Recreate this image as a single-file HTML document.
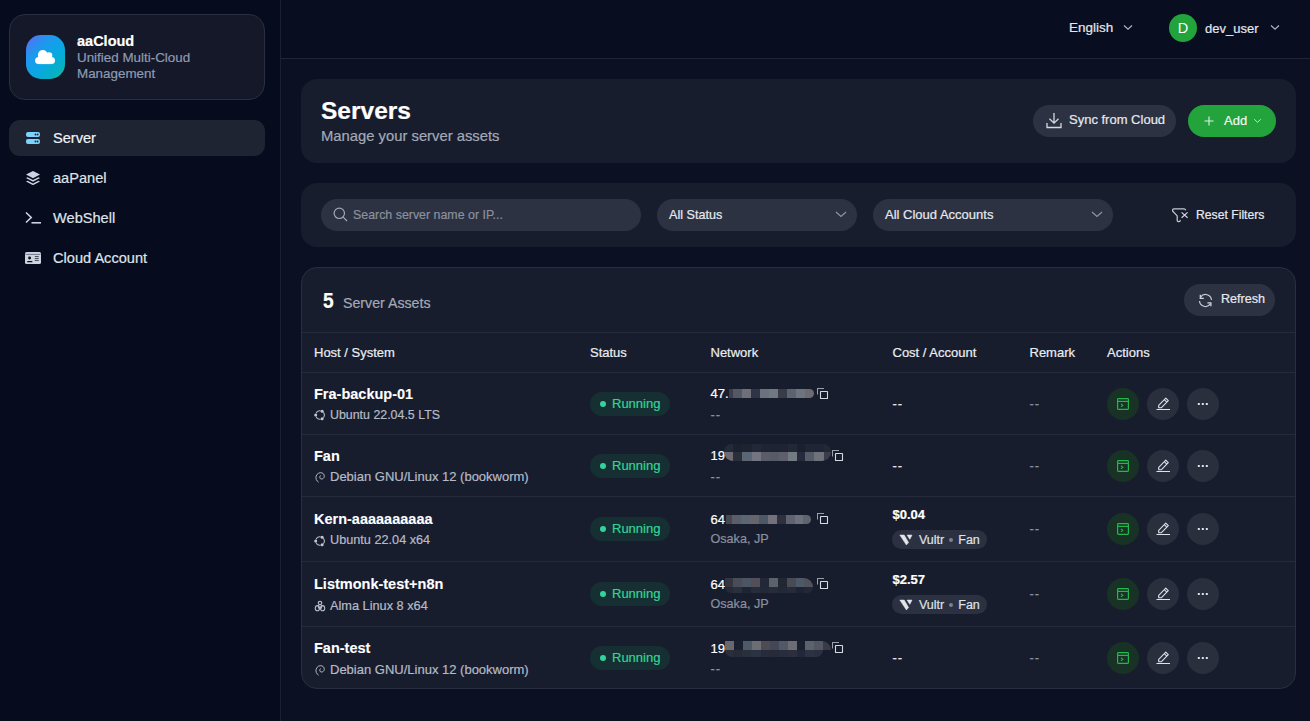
<!DOCTYPE html>
<html><head><meta charset="utf-8"><title>aaCloud - Servers</title>
<style>
*{box-sizing:border-box;margin:0;padding:0}
html,body{width:1310px;height:721px;overflow:hidden;background:#0b1023;font-family:"Liberation Sans",sans-serif;color:#e5e7eb}
.abs{position:absolute}
.nw{white-space:nowrap}
#sidebar{left:0;top:0;width:281px;height:721px;background:#060b1d;border-right:1px solid #1b2030}
#brand{left:9px;top:14px;width:256px;height:86px;background:#151829;border:1px solid #2a2e3d;border-radius:16px}
#logo{left:26px;top:35px;width:39px;height:44px;border-radius:15px;background:linear-gradient(135deg,#6268f2 0%,#2196ee 30%,#0aa6e6 55%,#06b0c8 78%,#12b797 100%)}
.brand-t{left:77px;top:33px;font-size:14.5px;font-weight:700;color:#fff;white-space:nowrap}
.brand-s{left:77px;top:50px;font-size:13.4px;line-height:16px;color:#8d9bb2;width:170px}
.nav{left:9px;width:256px;height:36px;border-radius:11px}
.nav.active{background:#1f2433}
.nav .ic{position:absolute;left:17px;top:11px;width:14px;height:14px}
.nav .lb{position:absolute;left:44px;top:10px;font-size:14.6px;color:#dfe3ea;white-space:nowrap}
#header{left:281px;top:0;width:1029px;height:59px;background:#080d1f;border-bottom:1px solid #1f2436}
.card{background:#181d2e;border-radius:16px}
.pill{border-radius:999px}
.btn-gray{background:#2d3243}
.th{font-size:13px;color:#eceef2;white-space:nowrap;top:345px}
.hline{position:absolute;left:302px;width:993px;height:1px;background:#262b3b}
.name{font-size:14.5px;font-weight:700;color:#fff;white-space:nowrap}
.os{font-size:12.6px;color:#b5bbc6;white-space:nowrap}
.stat{position:absolute;left:590px;width:80px;height:24px;border-radius:12px;background:#152f32}
.stat i{position:absolute;left:10px;top:9px;width:6px;height:6px;border-radius:50%;background:#34d399}
.stat span{position:absolute;left:22px;top:4px;font-size:13px;color:#34d399;white-space:nowrap}
.ip{font-size:13px;color:#fff;white-space:nowrap}
.dash{font-size:13px;color:#8a909d;white-space:nowrap;letter-spacing:1px}
.abtn{position:absolute;width:32px;height:32px;border-radius:50%;background:#2a2f3e}
.abtn.g{background:#183326}
.mz{position:absolute;height:9px}
body div{-webkit-text-stroke:0.2px currentColor}
.name,.bold{-webkit-text-stroke:0.1px currentColor}
</style></head>
<body>

<div id="sidebar" class="abs"></div>
<div id="brand" class="abs"></div>
<div id="logo" class="abs">
  <svg width="21" height="15" viewBox="0 0 21 15" style="position:absolute;left:9px;top:15px"><g fill="#fff"><circle cx="3.6" cy="10.6" r="3.5"/><circle cx="7.8" cy="5" r="4.9"/><circle cx="14" cy="5.6" r="3.3"/><circle cx="16.4" cy="10.5" r="3.6"/><rect x="3.6" y="7" width="12.8" height="7.1"/></g></svg>
</div>
<div class="abs brand-t">aaCloud</div>
<div class="abs brand-s">Unified Multi-Cloud Management</div>
<div class="abs nav active" style="top:120px">
  <svg class="ic" viewBox="0 0 14 14"><rect x="0" y="1" width="14" height="5" rx="2" fill="#7dd3fc"/><rect x="0" y="8" width="14" height="5" rx="2" fill="#7dd3fc"/><circle cx="9.5" cy="3.5" r="0.9" fill="#1f2433"/><circle cx="11.6" cy="3.5" r="0.9" fill="#1f2433"/><circle cx="9.5" cy="10.5" r="0.9" fill="#1f2433"/><circle cx="11.6" cy="10.5" r="0.9" fill="#1f2433"/></svg>
  <div class="lb" style="color:#f1f3f7">Server</div>
</div>
<div class="abs nav" style="top:160px">
  <svg class="ic" viewBox="0 0 14 14"><path fill="#cbd5e1" d="M7 0 14 3.6 7 7.2 0 3.6z"/><path fill="#cbd5e1" d="M1.6 6.3 7 9.1l5.4-2.8L14 7.1 7 10.7 0 7.1z"/><path fill="#cbd5e1" d="M1.6 9.8 7 12.6l5.4-2.8 1.6.8L7 14.2 0 10.6z"/></svg>
  <div class="lb">aaPanel</div>
</div>
<div class="abs nav" style="top:200px">
  <svg class="ic" viewBox="0 0 16 14" style="left:16px;width:16px"><path d="M1 1.5 6.2 6.5 1 11.5" fill="none" stroke="#cbd5e1" stroke-width="1.6"/><path d="M6.5 11.8H16" stroke="#cbd5e1" stroke-width="1.6"/></svg>
  <div class="lb">WebShell</div>
</div>
<div class="abs nav" style="top:240px">
  <svg class="ic" viewBox="0 0 16 12" style="left:16px;top:12px;width:16px;height:12px"><rect x="0" y="0" width="16" height="12" rx="1.6" fill="#cdd4df"/><rect x="0.6" y="1.9" width="14.8" height="1.1" fill="#7a8291"/><circle cx="4.6" cy="6" r="1.45" fill="#0a0f20"/><rect x="2.2" y="9.1" width="5.2" height="1.2" rx="0.3" fill="#0a0f20"/><rect x="9.8" y="4.1" width="3.9" height="1" fill="#3d4453"/><rect x="9.8" y="6.1" width="3.9" height="1" fill="#3d4453"/><rect x="9.8" y="8" width="3.9" height="1" fill="#4a5160"/></svg>
  <div class="lb">Cloud Account</div>
</div>


<div id="header" class="abs"></div>
<div class="abs nw" style="left:1069px;top:20px;font-size:13.5px;color:#e3e6ec">English</div>
<svg class="abs" style="left:1123px;top:24px" width="10" height="7" viewBox="0 0 10 7"><path d="M1 1.5 5 5.2 9 1.5" fill="none" stroke="#aeb4c0" stroke-width="1.2"/></svg>
<div class="abs" style="left:1169px;top:14px;width:28px;height:28px;border-radius:50%;background:#22a33b;color:#fff;font-size:14.5px;text-align:center;line-height:28px;-webkit-text-stroke:0">D</div>
<div class="abs nw" style="left:1205px;top:21px;font-size:13px;color:#e3e6ec">dev_user</div>
<svg class="abs" style="left:1270px;top:24px" width="10" height="7" viewBox="0 0 10 7"><path d="M1 1.5 5 5.2 9 1.5" fill="none" stroke="#aeb4c0" stroke-width="1.2"/></svg>


<div class="abs card" style="left:301px;top:79px;width:995px;height:84px"></div>
<div class="abs nw" style="left:321px;top:96.5px;font-size:24.5px;font-weight:700;color:#fff">Servers</div>
<div class="abs nw" style="left:321px;top:128px;font-size:14.8px;color:#a3aab7">Manage your server assets</div>
<div class="abs pill btn-gray" style="left:1033px;top:105px;width:143px;height:32px"></div>
<svg class="abs" style="left:1046px;top:112px" width="16" height="17" viewBox="0 0 16 17"><path d="M8 1v10M3.5 6.8 8 11.2l4.5-4.4" fill="none" stroke="#d5d9e0" stroke-width="1.3"/><path d="M1 11v4.5h14V11" fill="none" stroke="#d5d9e0" stroke-width="1.3"/></svg>
<div class="abs nw" style="left:1069px;top:112px;font-size:13px;color:#e6e9ee">Sync from Cloud</div>
<div class="abs pill" style="left:1188px;top:105px;width:88px;height:32px;background:#22a33b"></div>
<svg class="abs" style="left:1204px;top:116px" width="10" height="10" viewBox="0 0 10 10"><path d="M5 0.5v9M0.5 5h9" stroke="#e3f1e6" stroke-width="1.1"/></svg>
<div class="abs nw" style="left:1224px;top:112.5px;font-size:13px;color:#f2f7f3">Add</div>
<svg class="abs" style="left:1253px;top:118px" width="9" height="6" viewBox="0 0 9 6"><path d="M1.2 1.2 4.5 4.3 7.8 1.2" fill="none" stroke="#cfe8d4" stroke-width="0.95"/></svg>


<div class="abs card" style="left:301px;top:183px;width:995px;height:64px"></div>
<div class="abs pill btn-gray" style="left:321px;top:199px;width:320px;height:32px"></div>
<svg class="abs" style="left:333px;top:207px" width="15" height="15" viewBox="0 0 15 15"><circle cx="6.3" cy="6.3" r="5.2" fill="none" stroke="#a1a7b3" stroke-width="1.2"/><path d="M10.2 10.2 14 14" stroke="#a1a7b3" stroke-width="1.2"/></svg>
<div class="abs nw" style="left:353px;top:207.5px;font-size:12.4px;color:#8a909d">Search server name or IP...</div>
<div class="abs pill btn-gray" style="left:657px;top:199px;width:200px;height:32px"></div>
<div class="abs nw" style="left:669px;top:207.5px;font-size:12.6px;color:#e6e9ee">All Status</div>
<svg class="abs" style="left:835px;top:211px" width="12" height="7" viewBox="0 0 12 7"><path d="M1 1 6 5.5 11 1" fill="none" stroke="#8d93a0" stroke-width="1.2"/></svg>
<div class="abs pill btn-gray" style="left:873px;top:199px;width:240px;height:32px"></div>
<div class="abs nw" style="left:885px;top:207px;font-size:13px;color:#e6e9ee">All Cloud Accounts</div>
<svg class="abs" style="left:1091px;top:211px" width="12" height="7" viewBox="0 0 12 7"><path d="M1 1 6 5.5 11 1" fill="none" stroke="#8d93a0" stroke-width="1.2"/></svg>
<svg class="abs" style="left:1166px;top:202px" width="28" height="24" viewBox="0 0 28 24"><path d="M19.6 7.9Q19.2 6.8 18 6.8H7.9Q6.6 6.8 6.6 8.1V8.9L11.2 13.9V18.6Q11.2 19.6 12.3 19.6H13Q14.2 19.6 14.2 18.4" fill="none" stroke="#c3c7cf" stroke-width="1.25" stroke-linecap="round"/><path d="M15.6 10.4L21.6 15.8M21.6 10.4L15.6 15.8" stroke="#d0d4dc" stroke-width="1.2"/></svg>
<div class="abs nw" style="left:1196px;top:208px;font-size:12.2px;color:#e6e9ee">Reset Filters</div>


<div class="abs" style="left:301px;top:267px;width:995px;height:422px;background:#181d2e;border:1px solid #2a2f40;border-radius:16px"></div>
<div class="abs" style="left:323px;top:287.5px;font-size:22.5px;font-weight:700;color:#fff;transform:scaleX(0.85);transform-origin:0 0">5</div>
<div class="abs nw" style="left:343px;top:295px;font-size:14.2px;color:#a3aab7">Server Assets</div>
<div class="abs pill btn-gray" style="left:1184px;top:284px;width:91px;height:32px"></div>
<svg class="abs" style="left:1194px;top:289px" width="24" height="23" viewBox="0 0 24 23"><path d="M6.6 8.1A6 6 0 0 1 17.5 11M5.5 12A6 6 0 0 0 16.4 14.9" fill="none" stroke="#c8ccd4" stroke-width="1.25"/><path d="M6.3 5.8V9.3H9.8M13.4 13.8H16.9V17.3" fill="none" stroke="#d3d7de" stroke-width="1.25"/></svg>
<div class="abs nw" style="left:1221px;top:292px;font-size:12.6px;color:#e6e9ee">Refresh</div>
<div class="hline" style="top:332px"></div>
<div class="abs th" style="left:314px">Host / System</div>
<div class="abs th" style="left:590px">Status</div>
<div class="abs th" style="left:710.5px">Network</div>
<div class="abs th" style="left:892.5px">Cost / Account</div>
<div class="abs th" style="left:1029.5px">Remark</div>
<div class="abs th" style="left:1107px">Actions</div>
<div class="hline" style="top:372px"></div>
<div class="hline" style="top:434px"></div>
<div class="hline" style="top:496px"></div>
<div class="hline" style="top:561px"></div>
<div class="hline" style="top:626px"></div>
<div class="abs name" style="left:314px;top:385.5px">Fra-backup-01</div>
<div class="abs" style="left:314px;top:407.0px"><svg width="12" height="12" viewBox="0 0 12 12"><path d="M2.01 4.39A4.3 4.3 0 0 1 6.6 1.74M9.39 3.35A4.3 4.3 0 0 1 9.39 8.65M6.6 10.26A4.3 4.3 0 0 1 2.01 7.61" fill="none" stroke="#b5bbc6" stroke-width="1.05"/><g fill="#c3c8d1"><circle cx="1.7" cy="6" r="1.5"/><circle cx="8.15" cy="2.28" r="1.5"/><circle cx="8.15" cy="9.72" r="1.5"/></g></svg></div>
<div class="abs os" style="left:330px;top:407.9px;font-size:12.4px">Ubuntu 22.04.5 LTS</div>
<div class="stat" style="top:391.5px"><i></i><span>Running</span></div>
<div class="abs ip" style="left:710.5px;top:386.0px">47.</div>
<div class="mz" style="left:729px;top:389px;width:85.0px;height:9px;border-radius:0 5px 5px 0;background:linear-gradient(90deg,#3b3f4d 0.0px 4.0px,#545765 4.0px 13.0px,#6e6f78 13.0px 22.0px,#2e3646 22.0px 31.0px,#6a737d 31.0px 40.0px,#737880 40.0px 49.0px,#393b47 49.0px 58.0px,#5e6271 58.0px 67.0px,#6e7580 67.0px 76.0px,#6d6b72 76.0px 85.0px)"></div>
<div class="abs" style="left:817px;top:384px"><svg width="13" height="16" viewBox="0 0 13 16"><path d="M0.5 10.6V4.5H7" fill="none" stroke="#9a9fab" stroke-width="1.05"/><rect x="3.5" y="7.5" width="7" height="7" rx="0.3" fill="none" stroke="#d5d9e0" stroke-width="1.1"/></svg></div>
<div class="abs dash" style="left:710.5px;top:406.5px">--</div>
<div class="abs dash" style="left:892.5px;top:395.5px;color:#e6e9ee">--</div>
<div class="abs dash" style="left:1029.5px;top:395.5px">--</div>
<div class="abtn g" style="left:1107px;top:387.5px"><svg style="position:absolute;left:10px;top:10px" width="12" height="12" viewBox="0 0 12 12"><rect x="0.6" y="0.6" width="10.8" height="10.8" rx="0.8" fill="none" stroke="#22b84a" stroke-width="1.2"/><path d="M0.6 3.4h10.8" stroke="#22b84a" stroke-width="1.2"/><path d="M4 5.8l1.8 1.5L4 8.8" fill="none" stroke="#22b84a" stroke-width="1.1"/></svg></div>
<div class="abtn" style="left:1147px;top:387.5px"><svg style="position:absolute;left:9px;top:9px" width="14" height="14" viewBox="0 0 14 14"><path d="M9.8 1.2l2.5 2.5L5.2 10.8H2.7V8.3z" fill="none" stroke="#dfe2e8" stroke-width="1.1" stroke-linejoin="round"/><path d="M8.3 2.7l2.5 2.5" stroke="#dfe2e8" stroke-width="1.1"/><path d="M0.5 12.5h14" stroke="#dfe2e8" stroke-width="1.05"/></svg></div>
<div class="abtn" style="left:1187px;top:387.5px"><svg style="position:absolute;left:10px;top:15px" width="12" height="3" viewBox="0 0 12 3"><rect x="0.8" y="0" width="2" height="2" fill="#dfe2e8"/><rect x="4.8" y="0" width="2" height="2" fill="#dfe2e8"/><rect x="8.8" y="0" width="2" height="2" fill="#dfe2e8"/></svg></div>
<div class="abs name" style="left:314px;top:447.5px">Fan</div>
<div class="abs" style="left:314px;top:469.0px"><svg width="12" height="12" viewBox="0 0 12 12"><path d="M4.6 11.2C2.4 9.8 1.4 7.4 2.2 5 3 2.5 5.6 1.1 8 1.9 10 2.6 10.9 4.9 9.9 6.7 9.1 8.1 7.2 8.5 6.2 7.5 5.4 6.6 5.6 5.1 6.8 4.6" fill="none" stroke="#b5bbc6" stroke-width="0.95"/></svg></div>
<div class="abs os" style="left:330px;top:469.3px;font-size:13.0px">Debian GNU/Linux 12 (bookworm)</div>
<div class="stat" style="top:453.5px"><i></i><span>Running</span></div>
<div class="abs ip" style="left:710.5px;top:448.0px">19</div>
<div class="mz" style="left:723.5px;top:444px;width:107.0px;height:8px;border-radius:9px 9px 0 0;background:linear-gradient(90deg,#252a37 0.0px 9.5px,#1c2130 9.5px 18.5px,#1e2330 18.5px 27.5px,#222838 27.5px 37.0px,#1f2433 37.0px 46.0px,#1e2333 46.0px 55.0px,#1f2433 55.0px 64.0px,#232836 64.0px 73.0px,#1b1f2e 73.0px 81.0px,#1f2536 81.0px 90.0px,#202535 90.0px 99.5px,#232837 99.5px 107.0px)"></div>
<div class="mz" style="left:723.5px;top:452px;width:107.0px;height:9px;border-radius:0 0 9px 9px;background:linear-gradient(90deg,#6c6a72 0.0px 9.5px,#2b2f3a 9.5px 18.5px,#5b6674 18.5px 27.5px,#72757f 27.5px 37.0px,#5a5c69 37.0px 46.0px,#575b68 46.0px 55.0px,#5d5f6b 55.0px 64.0px,#737b82 64.0px 73.0px,#262b3b 73.0px 81.0px,#555b68 81.0px 90.0px,#6f717b 90.0px 99.5px,#3b3e4a 99.5px 107.0px)"></div>
<div class="abs" style="left:832px;top:446px"><svg width="13" height="16" viewBox="0 0 13 16"><path d="M0.5 10.6V4.5H7" fill="none" stroke="#9a9fab" stroke-width="1.05"/><rect x="3.5" y="7.5" width="7" height="7" rx="0.3" fill="none" stroke="#d5d9e0" stroke-width="1.1"/></svg></div>
<div class="abs dash" style="left:710.5px;top:468.5px">--</div>
<div class="abs dash" style="left:892.5px;top:457.5px;color:#e6e9ee">--</div>
<div class="abs dash" style="left:1029.5px;top:457.5px">--</div>
<div class="abtn g" style="left:1107px;top:449.5px"><svg style="position:absolute;left:10px;top:10px" width="12" height="12" viewBox="0 0 12 12"><rect x="0.6" y="0.6" width="10.8" height="10.8" rx="0.8" fill="none" stroke="#22b84a" stroke-width="1.2"/><path d="M0.6 3.4h10.8" stroke="#22b84a" stroke-width="1.2"/><path d="M4 5.8l1.8 1.5L4 8.8" fill="none" stroke="#22b84a" stroke-width="1.1"/></svg></div>
<div class="abtn" style="left:1147px;top:449.5px"><svg style="position:absolute;left:9px;top:9px" width="14" height="14" viewBox="0 0 14 14"><path d="M9.8 1.2l2.5 2.5L5.2 10.8H2.7V8.3z" fill="none" stroke="#dfe2e8" stroke-width="1.1" stroke-linejoin="round"/><path d="M8.3 2.7l2.5 2.5" stroke="#dfe2e8" stroke-width="1.1"/><path d="M0.5 12.5h14" stroke="#dfe2e8" stroke-width="1.05"/></svg></div>
<div class="abtn" style="left:1187px;top:449.5px"><svg style="position:absolute;left:10px;top:15px" width="12" height="3" viewBox="0 0 12 3"><rect x="0.8" y="0" width="2" height="2" fill="#dfe2e8"/><rect x="4.8" y="0" width="2" height="2" fill="#dfe2e8"/><rect x="8.8" y="0" width="2" height="2" fill="#dfe2e8"/></svg></div>
<div class="abs name" style="left:314px;top:511.0px">Kern-aaaaaaaaaa</div>
<div class="abs" style="left:314px;top:532.5px"><svg width="12" height="12" viewBox="0 0 12 12"><path d="M2.01 4.39A4.3 4.3 0 0 1 6.6 1.74M9.39 3.35A4.3 4.3 0 0 1 9.39 8.65M6.6 10.26A4.3 4.3 0 0 1 2.01 7.61" fill="none" stroke="#b5bbc6" stroke-width="1.05"/><g fill="#c3c8d1"><circle cx="1.7" cy="6" r="1.5"/><circle cx="8.15" cy="2.28" r="1.5"/><circle cx="8.15" cy="9.72" r="1.5"/></g></svg></div>
<div class="abs os" style="left:330px;top:533.1px;font-size:12.7px">Ubuntu 22.04 x64</div>
<div class="stat" style="top:517.0px"><i></i><span>Running</span></div>
<div class="abs ip" style="left:710.5px;top:511.5px">64</div>
<div class="mz" style="left:726px;top:515px;width:84.5px;height:9px;border-radius:0 5px 5px 0;background:linear-gradient(90deg,#46474f 0.0px 6.5px,#5a5e69 6.5px 15.5px,#5c6673 15.5px 24.5px,#66656e 24.5px 33.5px,#4e5766 33.5px 42.5px,#73727c 42.5px 51.5px,#2e303d 51.5px 60.5px,#5f6370 60.5px 69.5px,#6d717c 69.5px 77.0px,#5f6470 77.0px 84.5px)"></div>
<div class="abs" style="left:817px;top:509px"><svg width="13" height="16" viewBox="0 0 13 16"><path d="M0.5 10.6V4.5H7" fill="none" stroke="#9a9fab" stroke-width="1.05"/><rect x="3.5" y="7.5" width="7" height="7" rx="0.3" fill="none" stroke="#d5d9e0" stroke-width="1.1"/></svg></div>
<div class="abs dash" style="left:710.5px;top:532.0px;font-size:12.6px;letter-spacing:0">Osaka, JP</div>
<div class="abs" style="left:892.5px;top:507.0px;font-size:13px;font-weight:700;color:#fff">$0.04</div>
<div class="abs pill" style="left:892px;top:530.0px;width:95px;height:19px;background:#2c3142"></div>
<svg class="abs" style="left:894px;top:529.5px" width="24" height="20" viewBox="0 0 24 20"><path d="M5.8 5H10.2L14.6 12.5 12.4 15Z" fill="#e3e5ea" stroke="#e3e5ea" stroke-width="0.5" stroke-linejoin="round"/><path d="M13.1 5.1H18L15.8 9.3Z" fill="#e3e5ea" stroke="#e3e5ea" stroke-width="0.6" stroke-linejoin="round"/></svg>
<div class="abs nw" style="left:919px;top:533.0px;font-size:12.5px;color:#dfe2e8">Vultr<span style="display:inline-block;width:4px;height:4px;border-radius:50%;background:#7b8190;vertical-align:middle;margin:0 5px 2px 5px"></span>Fan</div>
<div class="abs dash" style="left:1029.5px;top:521.0px">--</div>
<div class="abtn g" style="left:1107px;top:513.0px"><svg style="position:absolute;left:10px;top:10px" width="12" height="12" viewBox="0 0 12 12"><rect x="0.6" y="0.6" width="10.8" height="10.8" rx="0.8" fill="none" stroke="#22b84a" stroke-width="1.2"/><path d="M0.6 3.4h10.8" stroke="#22b84a" stroke-width="1.2"/><path d="M4 5.8l1.8 1.5L4 8.8" fill="none" stroke="#22b84a" stroke-width="1.1"/></svg></div>
<div class="abtn" style="left:1147px;top:513.0px"><svg style="position:absolute;left:9px;top:9px" width="14" height="14" viewBox="0 0 14 14"><path d="M9.8 1.2l2.5 2.5L5.2 10.8H2.7V8.3z" fill="none" stroke="#dfe2e8" stroke-width="1.1" stroke-linejoin="round"/><path d="M8.3 2.7l2.5 2.5" stroke="#dfe2e8" stroke-width="1.1"/><path d="M0.5 12.5h14" stroke="#dfe2e8" stroke-width="1.05"/></svg></div>
<div class="abtn" style="left:1187px;top:513.0px"><svg style="position:absolute;left:10px;top:15px" width="12" height="3" viewBox="0 0 12 3"><rect x="0.8" y="0" width="2" height="2" fill="#dfe2e8"/><rect x="4.8" y="0" width="2" height="2" fill="#dfe2e8"/><rect x="8.8" y="0" width="2" height="2" fill="#dfe2e8"/></svg></div>
<div class="abs name" style="left:314px;top:576.0px">Listmonk-test+n8n</div>
<div class="abs" style="left:314px;top:597.5px"><svg width="12" height="12" viewBox="0 0 12 12"><ellipse cx="6" cy="3" rx="1.8" ry="1.6" fill="none" stroke="#b5bbc6" stroke-width="1.1"/><ellipse cx="3.4" cy="8.2" rx="2.1" ry="2.6" fill="none" stroke="#b5bbc6" stroke-width="1.1"/><ellipse cx="8.6" cy="8.2" rx="2.1" ry="2.6" fill="none" stroke="#b5bbc6" stroke-width="1.1"/><ellipse cx="6" cy="6.5" rx="1.8" ry="2" fill="none" stroke="#b5bbc6" stroke-width="1.1"/></svg></div>
<div class="abs os" style="left:330px;top:598.1px;font-size:12.75px">Alma Linux 8 x64</div>
<div class="stat" style="top:582.0px"><i></i><span>Running</span></div>
<div class="abs ip" style="left:710.5px;top:576.5px">64</div>
<div class="mz" style="left:725px;top:578px;width:88.0px;height:9px;border-radius:0 9px 0 0;background:linear-gradient(90deg,#35353f 0.0px 8.0px,#4a4d58 8.0px 17.0px,#4c5564 17.0px 26.0px,#524f58 26.0px 35.0px,#222838 35.0px 44.0px,#5d616b 44.0px 53.0px,#222732 53.0px 62.0px,#484b55 62.0px 71.0px,#4d5868 71.0px 79.0px,#51525c 79.0px 88.0px)"></div>
<div class="mz" style="left:725px;top:587px;width:88.0px;height:6px;border-radius:0 0 9px 9px;background:linear-gradient(90deg,#252a38 0.0px 8.0px,#2a2f3c 8.0px 17.0px,#1f2433 17.0px 26.0px,#272c3a 26.0px 35.0px,#232937 35.0px 44.0px,#272c3a 44.0px 53.0px,#232836 53.0px 62.0px,#262b39 62.0px 71.0px,#1e2231 71.0px 79.0px,#22283a 79.0px 88.0px)"></div>
<div class="abs" style="left:817px;top:574px"><svg width="13" height="16" viewBox="0 0 13 16"><path d="M0.5 10.6V4.5H7" fill="none" stroke="#9a9fab" stroke-width="1.05"/><rect x="3.5" y="7.5" width="7" height="7" rx="0.3" fill="none" stroke="#d5d9e0" stroke-width="1.1"/></svg></div>
<div class="abs dash" style="left:710.5px;top:597.0px;font-size:12.6px;letter-spacing:0">Osaka, JP</div>
<div class="abs" style="left:892.5px;top:572.0px;font-size:13px;font-weight:700;color:#fff">$2.57</div>
<div class="abs pill" style="left:892px;top:595.0px;width:95px;height:19px;background:#2c3142"></div>
<svg class="abs" style="left:894px;top:594.5px" width="24" height="20" viewBox="0 0 24 20"><path d="M5.8 5H10.2L14.6 12.5 12.4 15Z" fill="#e3e5ea" stroke="#e3e5ea" stroke-width="0.5" stroke-linejoin="round"/><path d="M13.1 5.1H18L15.8 9.3Z" fill="#e3e5ea" stroke="#e3e5ea" stroke-width="0.6" stroke-linejoin="round"/></svg>
<div class="abs nw" style="left:919px;top:598.0px;font-size:12.5px;color:#dfe2e8">Vultr<span style="display:inline-block;width:4px;height:4px;border-radius:50%;background:#7b8190;vertical-align:middle;margin:0 5px 2px 5px"></span>Fan</div>
<div class="abs dash" style="left:1029.5px;top:586.0px">--</div>
<div class="abtn g" style="left:1107px;top:578.0px"><svg style="position:absolute;left:10px;top:10px" width="12" height="12" viewBox="0 0 12 12"><rect x="0.6" y="0.6" width="10.8" height="10.8" rx="0.8" fill="none" stroke="#22b84a" stroke-width="1.2"/><path d="M0.6 3.4h10.8" stroke="#22b84a" stroke-width="1.2"/><path d="M4 5.8l1.8 1.5L4 8.8" fill="none" stroke="#22b84a" stroke-width="1.1"/></svg></div>
<div class="abtn" style="left:1147px;top:578.0px"><svg style="position:absolute;left:9px;top:9px" width="14" height="14" viewBox="0 0 14 14"><path d="M9.8 1.2l2.5 2.5L5.2 10.8H2.7V8.3z" fill="none" stroke="#dfe2e8" stroke-width="1.1" stroke-linejoin="round"/><path d="M8.3 2.7l2.5 2.5" stroke="#dfe2e8" stroke-width="1.1"/><path d="M0.5 12.5h14" stroke="#dfe2e8" stroke-width="1.05"/></svg></div>
<div class="abtn" style="left:1187px;top:578.0px"><svg style="position:absolute;left:10px;top:15px" width="12" height="3" viewBox="0 0 12 3"><rect x="0.8" y="0" width="2" height="2" fill="#dfe2e8"/><rect x="4.8" y="0" width="2" height="2" fill="#dfe2e8"/><rect x="8.8" y="0" width="2" height="2" fill="#dfe2e8"/></svg></div>
<div class="abs name" style="left:314px;top:640.0px">Fan-test</div>
<div class="abs" style="left:314px;top:661.5px"><svg width="12" height="12" viewBox="0 0 12 12"><path d="M4.6 11.2C2.4 9.8 1.4 7.4 2.2 5 3 2.5 5.6 1.1 8 1.9 10 2.6 10.9 4.9 9.9 6.7 9.1 8.1 7.2 8.5 6.2 7.5 5.4 6.6 5.6 5.1 6.8 4.6" fill="none" stroke="#b5bbc6" stroke-width="0.95"/></svg></div>
<div class="abs os" style="left:330px;top:661.8px;font-size:13.0px">Debian GNU/Linux 12 (bookworm)</div>
<div class="stat" style="top:646.0px"><i></i><span>Running</span></div>
<div class="abs ip" style="left:710.5px;top:640.5px">19</div>
<div class="mz" style="left:724.5px;top:641px;width:106.5px;height:9px;border-radius:0 9px 0 0;background:linear-gradient(90deg,#6a686f 0.0px 8.5px,#1b2030 8.5px 17.5px,#4f5a68 17.5px 26.5px,#6d6d76 26.5px 36.0px,#4e4b53 36.0px 45.0px,#434756 45.0px 54.0px,#525867 54.0px 63.0px,#6c6c75 63.0px 72.0px,#1b2030 72.0px 80.0px,#5b636b 80.0px 89.0px,#525763 89.0px 98.5px,#393c47 98.5px 106.5px)"></div>
<div class="mz" style="left:724.5px;top:650px;width:98.5px;height:7px;border-radius:0 0 9px 9px;background:linear-gradient(90deg,#2a2f3b 0.0px 8.5px,#262b38 8.5px 17.5px,#2a2f3c 17.5px 26.5px,#2b3242 26.5px 36.0px,#272c3b 36.0px 45.0px,#272b39 45.0px 54.0px,#292d3b 54.0px 63.0px,#2b2f3d 63.0px 72.0px,#232838 72.0px 80.0px,#2b3244 80.0px 89.0px,#2a3040 89.0px 98.5px)"></div>
<div class="abs" style="left:832px;top:638px"><svg width="13" height="16" viewBox="0 0 13 16"><path d="M0.5 10.6V4.5H7" fill="none" stroke="#9a9fab" stroke-width="1.05"/><rect x="3.5" y="7.5" width="7" height="7" rx="0.3" fill="none" stroke="#d5d9e0" stroke-width="1.1"/></svg></div>
<div class="abs dash" style="left:710.5px;top:661.0px">--</div>
<div class="abs dash" style="left:892.5px;top:650.0px;color:#e6e9ee">--</div>
<div class="abs dash" style="left:1029.5px;top:650.0px">--</div>
<div class="abtn g" style="left:1107px;top:642.0px"><svg style="position:absolute;left:10px;top:10px" width="12" height="12" viewBox="0 0 12 12"><rect x="0.6" y="0.6" width="10.8" height="10.8" rx="0.8" fill="none" stroke="#22b84a" stroke-width="1.2"/><path d="M0.6 3.4h10.8" stroke="#22b84a" stroke-width="1.2"/><path d="M4 5.8l1.8 1.5L4 8.8" fill="none" stroke="#22b84a" stroke-width="1.1"/></svg></div>
<div class="abtn" style="left:1147px;top:642.0px"><svg style="position:absolute;left:9px;top:9px" width="14" height="14" viewBox="0 0 14 14"><path d="M9.8 1.2l2.5 2.5L5.2 10.8H2.7V8.3z" fill="none" stroke="#dfe2e8" stroke-width="1.1" stroke-linejoin="round"/><path d="M8.3 2.7l2.5 2.5" stroke="#dfe2e8" stroke-width="1.1"/><path d="M0.5 12.5h14" stroke="#dfe2e8" stroke-width="1.05"/></svg></div>
<div class="abtn" style="left:1187px;top:642.0px"><svg style="position:absolute;left:10px;top:15px" width="12" height="3" viewBox="0 0 12 3"><rect x="0.8" y="0" width="2" height="2" fill="#dfe2e8"/><rect x="4.8" y="0" width="2" height="2" fill="#dfe2e8"/><rect x="8.8" y="0" width="2" height="2" fill="#dfe2e8"/></svg></div>

</body></html>
